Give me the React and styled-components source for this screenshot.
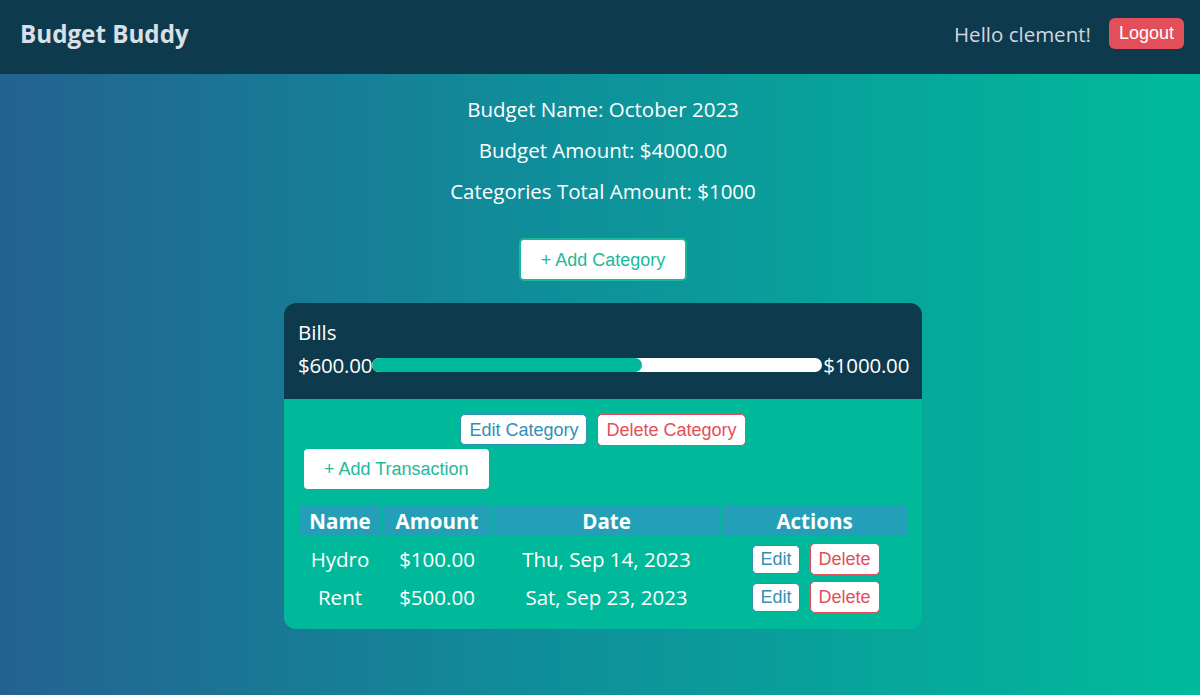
import React from "react";
import styled, { createGlobalStyle } from "styled-components";

const Global = createGlobalStyle`
  html, body { margin: 0; padding: 0; }
  body {
    font-family: "Open Sans", "Noto Sans", sans-serif;
    background: linear-gradient(to right, #246290 0%, #0f8e9a 45%, #00bb9b 100%);
    min-height: 695px;
    color: #fff;
  }
`;

const Page = styled.div`
  min-height: 695px;
  display: flex;
  flex-direction: column;
`;

const NavBar = styled.header`
  height: 74px;
  background: #0e3a4e;
  display: flex;
  align-items: center;
  justify-content: space-between;
  padding: 0 16px 0 20px;
  box-sizing: border-box;
`;

const Brand = styled.div`
  font-size: 24.2px;
  font-weight: 700;
  color: #d8e0e6;
  margin-top: -7px;
`;

const UserArea = styled.div`
  display: flex;
  align-items: center;
  gap: 18px;
  margin-top: -6px;
`;

const Greeting = styled.span`
  font-size: 20.5px;
  color: #cfd8de;
`;

const Button = styled.button`
  font-family: "Liberation Sans", Arial, sans-serif;
  background: #fff;
  cursor: pointer;
  box-sizing: border-box;
  line-height: 1;
  color: ${p => p.$color};
  border: ${p => p.$border};
  border-radius: ${p => p.$radius || "4px"};
  font-size: ${p => p.$size || "18px"};
  padding: ${p => p.$pad};
  height: ${p => p.$h};
`;

const LogoutButton = styled.button`
  font-family: "Liberation Sans", Arial, sans-serif;
  background: #e24f59;
  color: #fff;
  border: none;
  border-radius: 6px;
  font-size: 18px;
  height: 31px;
  padding: 0 10px;
  margin-top: -2px;
`;

const Main = styled.main`
  display: flex;
  flex-direction: column;
  align-items: center;
  padding-top: 15px;
  padding-left: 6px;
`;

const InfoLine = styled.p`
  margin: 0;
  font-size: 20.5px;
  line-height: 41px;
  color: #fff;
`;

const AddCategoryWrap = styled.div`
  margin-top: 26px;
  margin-bottom: 22px;
`;

const Card = styled.section`
  width: 638px;
  border-radius: 12px;
  overflow: hidden;
  background: #00b99a;
`;

const CardHead = styled.div`
  background: #0e3a4e;
  height: 96px;
  padding: 15px 13px 0 14px;
  box-sizing: border-box;
`;

const CatTitle = styled.div`
  font-size: 20.5px;
  line-height: 28px;
`;

const ProgressRow = styled.div`
  display: flex;
  align-items: center;
  margin-top: 5px;
  font-size: 20.5px;
  letter-spacing: -0.2px;
`;

const Track = styled.div`
  flex: 0 0 450px;
  height: 14px;
  background: #fff;
  border-radius: 7px;
  overflow: hidden;
  margin: 0 1px 0 0;
`;

const Fill = styled.div`
  height: 100%;
  background: #00b99a;
  border-radius: 7px;
`;

const CardBody = styled.div`
  padding: 15px 15px 13px;
`;

const CatActions = styled.div`
  display: flex;
  justify-content: center;
  gap: 10px;
`;

const TransRow = styled.div`
  padding-left: 5px;
  margin-top: 3px;
`;

const Table = styled.table`
  margin-top: 17px;
  width: 612px;
  border-spacing: 2px 0;
  margin-left: -2px;
  border-collapse: separate;

  tbody tr:first-child td {
    padding-top: 4px;
  }
`;

const Th = styled.th`
  background: #23a0b7;
  font-size: 20.5px;
  font-weight: 700;
  height: 30px;
  padding: 0;
  width: ${p => p.$w};
`;

const Td = styled.td`
  text-align: center;
  font-size: 20.5px;
  height: 38px;
  padding: 0;
`;

const RowActions = styled.div`
  display: flex;
  justify-content: center;
  align-items: center;
  gap: 10px;
  padding-left: 3px;
`;

const rows = [
  { name: "Hydro", amount: "$100.00", date: "Thu, Sep 14, 2023" },
  { name: "Rent", amount: "$500.00", date: "Sat, Sep 23, 2023" },
];

export default function App() {
  return (
    <>
      <Global />
      <Page>
        <NavBar>
          <Brand>Budget Buddy</Brand>
          <UserArea>
            <Greeting>Hello clement!</Greeting>
            <LogoutButton>Logout</LogoutButton>
          </UserArea>
        </NavBar>
        <Main>
          <InfoLine>Budget Name: October 2023</InfoLine>
          <InfoLine>Budget Amount: $4000.00</InfoLine>
          <InfoLine>Categories Total Amount: $1000</InfoLine>
          <AddCategoryWrap>
            <Button $color="#1db99a" $border="2px solid #1ab99a" $pad="0 20px" $h="43px" $radius="5px">
              + Add Category
            </Button>
          </AddCategoryWrap>
          <Card>
            <CardHead>
              <CatTitle>Bills</CatTitle>
              <ProgressRow>
                <span>$600.00</span>
                <Track>
                  <Fill style={{ width: "60%" }} />
                </Track>
                <span>$1000.00</span>
              </ProgressRow>
            </CardHead>
            <CardBody>
              <CatActions>
                <Button $color="#3390b3" $border="1px solid #3390b3" $pad="0 8px" $h="31px" $radius="5px">
                  Edit Category
                </Button>
                <Button $color="#e24f59" $border="1px solid #e24f59" $pad="0 8px" $h="32px" $radius="5px">
                  Delete Category
                </Button>
              </CatActions>
              <TransRow>
                <Button $color="#1db99a" $border="none" $pad="0 20px" $h="40px">
                  + Add Transaction
                </Button>
              </TransRow>
              <Table>
                <thead>
                  <tr>
                    <Th $w="82px">Name</Th>
                    <Th $w="108px">Amount</Th>
                    <Th $w="227px">Date</Th>
                    <Th $w="185px">Actions</Th>
                  </tr>
                </thead>
                <tbody>
                  {rows.map(r => (
                    <tr key={r.name}>
                      <Td>{r.name}</Td>
                      <Td>{r.amount}</Td>
                      <Td>{r.date}</Td>
                      <Td>
                        <RowActions>
                          <Button $color="#3390b3" $border="1px solid #3390b3" $pad="0 7px" $h="29px" $radius="5px">
                            Edit
                          </Button>
                          <Button $color="#e24f59" $border="1px solid #e24f59" $pad="0 8px" $h="32px" $radius="5px">
                            Delete
                          </Button>
                        </RowActions>
                      </Td>
                    </tr>
                  ))}
                </tbody>
              </Table>
            </CardBody>
          </Card>
        </Main>
      </Page>
    </>
  );
}
